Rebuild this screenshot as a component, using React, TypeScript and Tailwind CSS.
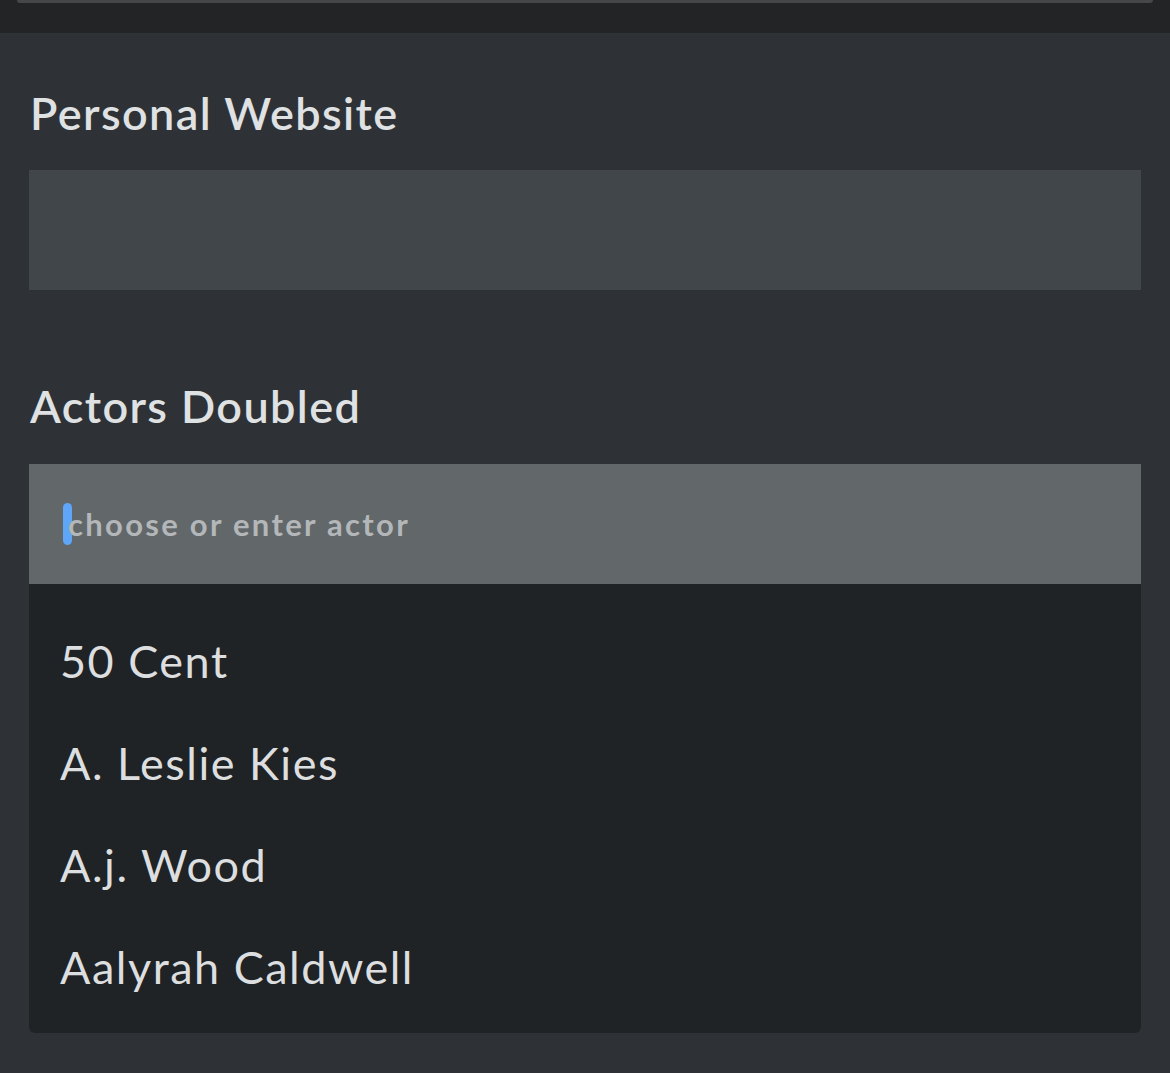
import React from "react";

const items = ["21 Savage", "50 Cent", "A. Leslie Kies", "A.j. Wood", "Aalyrah Caldwell"];

export default function App() {
  return (
    <div
      className="min-h-[1073px] w-full bg-[#2e3236] text-[#dfe1e2]"
      style={{ fontFamily: "Lato, 'Noto Sans', sans-serif" }}
    >
      <div className="h-[33px] bg-[#232426] px-[17px]">
        <div className="h-[3px] w-full rounded-b-full bg-[#454749]" />
      </div>
      <div className="px-[29px] pr-[29px]">
        <div className="pt-[52px] pl-[1px] text-[45px] font-semibold leading-[56px] tracking-[1.4px]">
          Personal Website
        </div>
        <div className="mt-[29px] h-[120px] w-full bg-[#41464a]" />
        <div className="mt-[88px] pl-[1px] text-[45px] font-semibold leading-[56px] tracking-[1.4px]">
          Actors Doubled
        </div>
        <div className="mt-[30px] flex h-[120px] w-full items-center bg-[#62676a] pl-[34px]">
          <div className="h-[42px] w-[9px] rounded-full bg-[#5fa5f8]" />
          <span className="-ml-[4px] text-[31px] font-bold tracking-[2.3px] text-[#b4b7b9]">
            choose or enter actor
          </span>
        </div>
        <div className="h-[449px] w-full overflow-hidden rounded-b-[6px] bg-[#1f2326]">
          <div className="-mt-[76px]">
            {items.map((n) => (
              <div key={n} className="flex h-[102px] items-center pl-[31px] text-[45px] leading-none tracking-[1.5px] text-[#dcdedf]">
                {n}
              </div>
            ))}
          </div>
        </div>
      </div>
    </div>
  );
}
